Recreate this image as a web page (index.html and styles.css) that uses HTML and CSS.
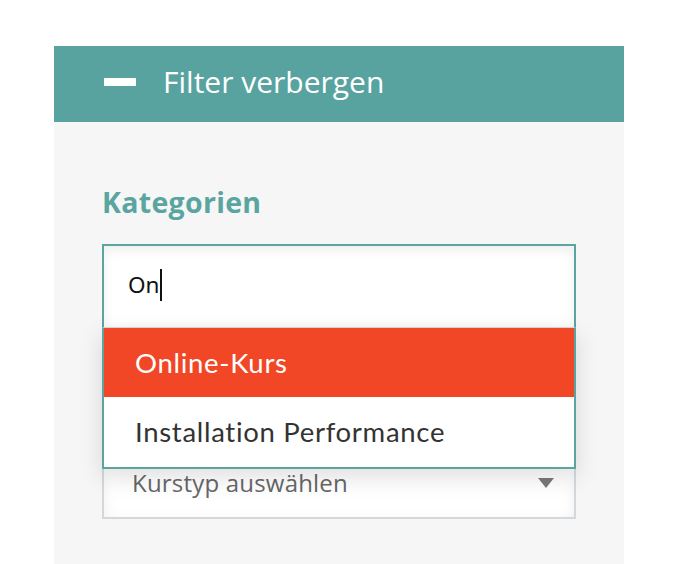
FILE: index.html
```html
<!DOCTYPE html>
<html lang="de">
<head>
<meta charset="utf-8">
<title>Filter</title>
<link rel="stylesheet" href="styles.css">
</head>
<body>
<div class="panel">
  <div class="panel-head">
    <span class="minus"></span>
    <span class="head-label">Filter verbergen</span>
  </div>
  <div class="panel-body">
    <h2 class="group-title">Kategorien</h2>
    <div class="combo">
      <div class="combo-input"><span class="typed">On</span><span class="caret"></span></div>
      <ul class="combo-list">
        <li class="combo-item active">Online-Kurs</li>
        <li class="combo-item">Installation Performance</li>
      </ul>
    </div>
    <div class="select">
      <span class="select-label">Kurstyp auswählen</span>
      <svg class="select-arrow" width="16" height="10" viewBox="0 0 16 10"><path d="M0 0H16L8 10Z" fill="#7a7a7a"/></svg>
    </div>
  </div>
</div>
</body>
</html>
```
FILE: styles.css
```css
html, body {
  margin: 0;
  padding: 0;
  background: #ffffff;
}
body {
  font-family: "Open Sans", "Noto Sans", sans-serif;
}
.panel {
  margin: 46px 0 0 54px;
  width: 570px;
  background: #f6f6f6;
}
.panel-head {
  height: 76px;
  box-sizing: border-box;
  background: #58a39f;
  display: flex;
  align-items: center;
  padding: 0 0 4px 50px;
}
.minus {
  width: 32px;
  height: 8px;
  background: #ffffff;
  margin-right: 27px;
}
.head-label {
  color: #ffffff;
  font-size: 30px;
  line-height: 40px;
}
.panel-body {
  padding: 62px 48px 45px 48px;
}
.group-title {
  margin: 0 0 24px 0;
  font-size: 28.5px;
  line-height: 36px;
  font-weight: 700;
  letter-spacing: 0.3px;
  color: #5aa5a0;
}
.combo {
  position: relative;
}
.combo-input {
  height: 83px;
  box-sizing: border-box;
  border: 2px solid #5aa5a0;
  border-bottom: none;
  background: #ffffff;
  box-shadow: inset 0 4px 12px rgba(0, 0, 0, 0.07);
  display: flex;
  align-items: center;
  padding: 0 0 4px 24px;
  font-family: "Noto Sans", sans-serif;
  font-size: 22.5px;
  line-height: 30px;
  color: #111111;
}
.caret {
  width: 1.5px;
  height: 32px;
  background: #111111;
  margin-left: 1px;
}
.combo-list {
  position: absolute;
  left: 0;
  right: 0;
  top: 100%;
  z-index: 2;
  margin: 0;
  padding: 0;
  list-style: none;
  background: #ffffff;
  border: 2px solid #5aa5a0;
  border-top: 1px solid #d2d2d2;
  box-shadow: 0 8px 22px rgba(0, 0, 0, 0.13);
  font-family: "Lato", sans-serif;
  font-size: 27.5px;
  letter-spacing: 0.7px;
  color: #333333;
}
.combo-item {
  height: 69px;
  display: flex;
  align-items: center;
  padding: 0 0 1px 31px;
  box-sizing: border-box;
}
.combo-item + .combo-item {
  height: 70px;
}
.combo-item.active {
  background: #f24726;
  color: #ffffff;
}
.select {
  margin-top: 109px;
  height: 83px;
  box-sizing: border-box;
  border: 2px solid #d3d8dc;
  background: #ffffff;
  box-shadow: inset 0 4px 14px rgba(0, 0, 0, 0.07);
  display: flex;
  align-items: center;
  justify-content: space-between;
  padding: 10px 20px 0 28px;
  color: #676767;
  font-size: 24px;
  line-height: 32px;
  letter-spacing: 0.2px;
}
.select-arrow {
  display: block;
}
```
